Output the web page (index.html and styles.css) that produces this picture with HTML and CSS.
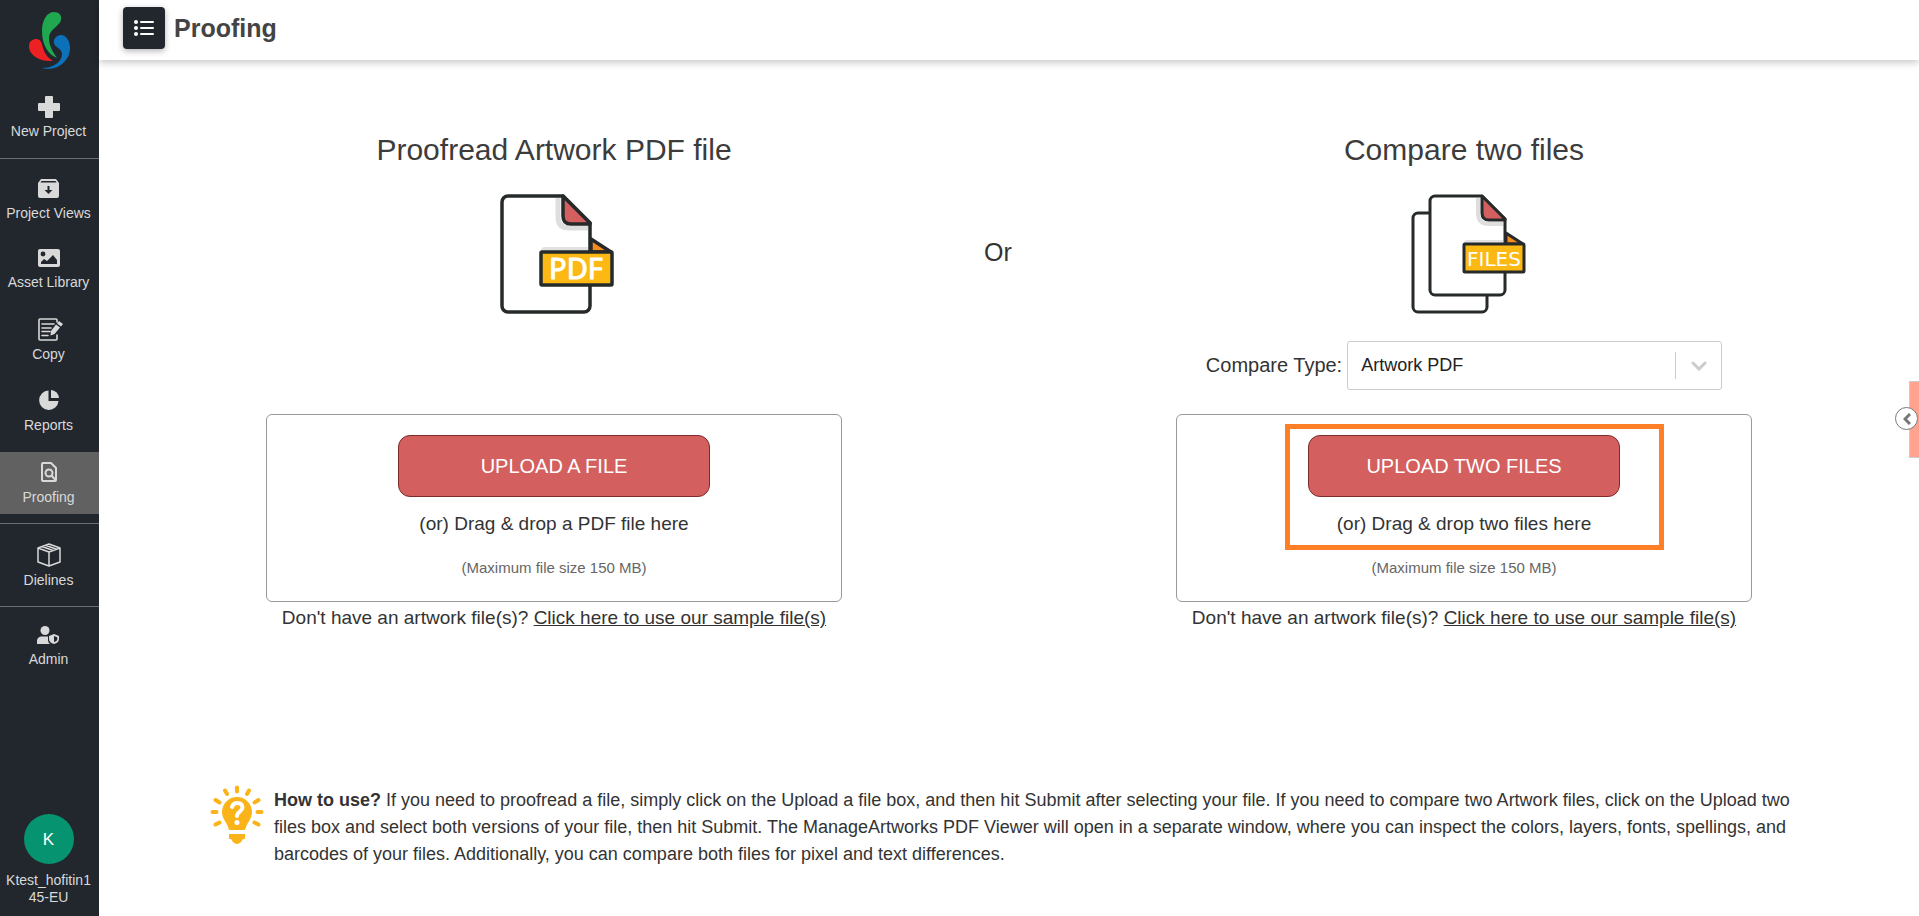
FILE: index.html
```html
<!DOCTYPE html>
<html lang="en">
<head>
  <meta charset="UTF-8">
  <meta name="viewport" content="width=device-width, initial-scale=1">
  <title>Proofing</title>
  <link rel="stylesheet" href="styles.css">
</head>
<body>

  <aside class="sidebar">
    <a href="#" class="logo" aria-label="Home">
      <svg width="42" height="58" viewBox="0 0 42 58">
        <path fill="#1fa84f" d="M28 46C20 43 13 34 13 19C13 8 18 0 25 0C30 0 33 3 32 8C31 14 20 17 20 26C20 34 24 40 28 46Z"/>
        <path fill="#ed2024" d="M24 49C12 50 0 44 0 34C0 29 4 27 7 27C12 27 13 31 14 36C16 42 19 46 24 49Z"/>
        <path fill="#0b72ba" d="M13 56C24 56 33 50 33 42C33 36 26 36 25 31C24 27 28 23 32 23C37 23 41 29 41 36C41 49 28 60 13 56Z"/>
      </svg>
    </a>

    <nav class="nav">
      <a href="#" class="nav-item">
        <svg class="nav-icon large" width="22" height="22" viewBox="0 0 22 22"><path fill="currentColor" d="M8 0h6a1 1 0 0 1 1 1v6h6a1 1 0 0 1 1 1v6a1 1 0 0 1-1 1h-6v6a1 1 0 0 1-1 1H8a1 1 0 0 1-1-1v-6H1a1 1 0 0 1-1-1V8a1 1 0 0 1 1-1h6V1a1 1 0 0 1 1-1z"/></svg>
        New Project
      </a>
      <hr class="divider wide">
      <a href="#" class="nav-item">
        <svg class="nav-icon" width="21" height="19" viewBox="0 0 21 19"><path fill="currentColor" fill-rule="evenodd" d="M3 0h15l3 4v13a2 2 0 0 1-2 2H2a2 2 0 0 1-2-2V4zM3.500 2L2.500 3.500h16L17.500 2zM9.500 7v4H6.500l4 4 4-4h-3V7z"/></svg>
        Project Views
      </a>
      <a href="#" class="nav-item">
        <svg class="nav-icon" width="22" height="18" viewBox="0 0 22 18"><path fill="currentColor" fill-rule="evenodd" d="M2 0h18a2 2 0 0 1 2 2v14a2 2 0 0 1-2 2H2a2 2 0 0 1-2-2V2a2 2 0 0 1 2-2zM5 2.600a2.400 2.400 0 1 0 0 4.800 2.400 2.400 0 0 0 0-4.800zM3 15h16v-4l-4-5-6 6-3-2-3 3z"/></svg>
        Asset Library
      </a>
      <a href="#" class="nav-item">
        <svg class="nav-icon large copy" width="26" height="23" viewBox="0 0 26 23" fill="none" stroke="currentColor" stroke-width="1.600" stroke-linecap="round">
          <path d="M19 4V2a1 1 0 0 0-1-1H2a1 1 0 0 0-1 1v19a1 1 0 0 0 1 1h16a1 1 0 0 0 1-1v-4M4 6h12M4 10h9M4 13.500h8M4 17.500h6"/>
          <path fill="currentColor" stroke="none" d="M21 3l4 3-2 2.500-4-3zM18 6.500l4 3-5.500 6.500-4 1.500.500-4.500z"/>
        </svg>
        Copy
      </a>
      <a href="#" class="nav-item">
        <svg class="nav-icon" width="20" height="20" viewBox="0 0 20 20" fill="currentColor"><path d="M9.500.500V11H19.500A9.700 9.700 0 1 1 9.500.500z"/><path d="M12 0a8.200 8.200 0 0 1 8 8h-8z"/></svg>
        Reports
      </a>
      <a href="#" class="nav-item active">
        <svg class="nav-icon" width="16" height="20" viewBox="0 0 16 20" fill="none" stroke="currentColor" stroke-width="2">
          <path d="M10 1H2a1 1 0 0 0-1 1v16a1 1 0 0 0 1 1h12a1 1 0 0 0 1-1V6z"/>
          <circle cx="8" cy="11" r="3.500"/><path d="M10.500 13.500L14.500 18"/>
        </svg>
        Proofing
      </a>
      <hr class="divider">
      <a href="#" class="nav-item">
        <svg class="nav-icon large" width="24" height="24" viewBox="0 0 24 24" fill="none" stroke="currentColor" stroke-width="1.500" stroke-linejoin="round">
          <path d="M12 1l11 4v14l-11 4-11-4V5zM1 5l11 4 11-4M12 9v14M5 3.500l11 4M8.500 2.300l11 4"/>
        </svg>
        Dielines
      </a>
      <hr class="divider">
      <a href="#" class="nav-item">
        <svg class="nav-icon admin" width="22" height="18" viewBox="0 0 22 18" fill="currentColor">
          <circle cx="8" cy="4.500" r="4.500"/>
          <path d="M0 18v-2.500C0 12 2 10.500 5 10.500h6v3.500c0 1.500.700 3 2 4z"/>
          <path fill-rule="evenodd" d="M17 8l5 2v3c0 2.500-2 4.500-5 5-3-.500-5-2.500-5-5v-3zM17 10v6c2-.500 3.300-1.500 3.300-3v-1.800z"/>
        </svg>
        Admin
      </a>
    </nav>

    <a href="#" class="user">
      <span class="avatar">K</span>
      <span class="user-name">Ktest_hofitin145-EU</span>
    </a>
  </aside>

  <div class="page">
    <header class="topbar">
      <button type="button" class="menu-btn" aria-label="Menu">
        <svg width="20" height="16" viewBox="0 0 20 16" stroke="#fff" stroke-width="2" stroke-linecap="round">
          <path d="M7 2h12M7 8h12M7 14h12"/>
          <g fill="#fff" stroke="none"><circle cx="2" cy="2" r="2"/><circle cx="2" cy="8" r="2"/><circle cx="2" cy="14" r="2"/></g>
        </svg>
      </button>
      <h1>Proofing</h1>
    </header>

    <main>
      <div class="panels">
        <section class="panel panel-left">
          <h2>Proofread Artwork PDF file</h2>
          <svg class="file-icon" width="120" height="121" viewBox="1 0 120 121" stroke="#262a2b" stroke-width="3.500" stroke-linejoin="round">
            <path fill="#fff" d="M15 3h55l27 27v83a6 6 0 0 1-6 6H15a6 6 0 0 1-6-6V9a6 6 0 0 1 6-6z"/>
            <path fill="none" stroke="#dedede" stroke-width="5" stroke-linejoin="miter" d="M65 5v19q0 11 11 11h19"/>
            <path fill="#e2e2e2" stroke="none" d="M48 58q0-4 4-4h43v4z"/>
            <path fill="#d45f5f" d="M70 3v20q0 8 8 8h19v-1z"/>
            <path fill="#f58c1e" d="M98 46v13h20z"/>
            <rect x="48" y="59" width="71" height="33" rx="1" fill="#fdb913"/>
            <text x="83" y="86" class="icon-text" font-size="29">PDF</text>
          </svg>
          <div class="drop-box">
            <button type="button" class="upload-btn">UPLOAD A FILE</button>
            <p class="drag-text">(or) Drag &amp; drop a PDF file here</p>
            <p class="size-text">(Maximum file size 150 MB)</p>
          </div>
          <p class="sample">Don't have an artwork file(s)? <a href="#">Click here to use our sample file(s)</a></p>
        </section>

        <div class="or">Or</div>

        <section class="panel panel-right">
          <h2>Compare two files</h2>
          <svg class="file-icon" width="122" height="121" viewBox="1 0 122 121" stroke="#262a2b" stroke-width="3" stroke-linejoin="round">
            <path fill="#fff" d="M16 20h64a5 5 0 0 1 5 5v89a5 5 0 0 1-5 5H16a5 5 0 0 1-5-5V25a5 5 0 0 1 5-5z"/>
            <path fill="#fff" d="M33 3h47l23 23v71a5 5 0 0 1-5 5H33a5 5 0 0 1-5-5V8a5 5 0 0 1 5-5z"/>
            <path fill="none" stroke="#dedede" stroke-width="4" stroke-linejoin="miter" d="M76 5v15q0 11 11 11h14"/>
            <path fill="#e2e2e2" stroke="none" d="M62 50q0-3 3-3h36v3z"/>
            <path fill="#d45f5f" d="M80 3v17q0 7 7 7h16v-1z"/>
            <path fill="#f58c1e" d="M104 40v11h17z"/>
            <rect x="62" y="51" width="60" height="28" rx="1" fill="#fdb913"/>
            <text x="92" y="73" class="icon-text thin" font-size="20">FILES</text>
          </svg>
          <div class="compare">
            <label for="compareType">Compare Type:</label>
            <div class="select-wrap">
              <select id="compareType">
                <option>Artwork PDF</option>
              </select>
              <span class="select-arrow">
                <svg width="16" height="10" viewBox="0 0 16 10" fill="none" stroke="#ccc" stroke-width="3" stroke-linecap="round"><path d="M2 2l6 6 6-6"/></svg>
              </span>
            </div>
          </div>
          <div class="drop-box">
            <button type="button" class="upload-btn">UPLOAD TWO FILES</button>
            <p class="drag-text">(or) Drag &amp; drop two files here</p>
            <p class="size-text">(Maximum file size 150 MB)</p>
            <div class="highlight"></div>
          </div>
          <p class="sample">Don't have an artwork file(s)? <a href="#">Click here to use our sample file(s)</a></p>
        </section>
      </div>

      <div class="how-to">
        <svg class="bulb" width="54" height="60" viewBox="0 0 54 60">
          <g stroke="#fbb31a" stroke-width="4" stroke-linecap="round">
            <path d="M27 2.500v4M15 5.500l2 3.500M39 5.500l-2 3.500M5.500 15l4 2.500M48.500 15l-4 2.500M2.500 27h4M51.500 27h-4M5.500 39.500l4-2M48.500 39.500l-4-2"/>
          </g>
          <path fill="#fbb31a" d="M27 12a15 15 0 0 1 15 15c0 7-5 10-7 18H19c-2-8-7-11-7-18a15 15 0 0 1 15-15zM19 49h16v5h-2l-2 3q-4 4-8 0l-2-3h-2z"/>
          <path fill="none" stroke="#fff" stroke-width="4" stroke-linecap="round" d="M22 22q1-4 5.500-4t5 4.500c0 4-5.500 4-5.500 8.500"/>
          <circle cx="27" cy="37.500" r="2.500" fill="#fff"/>
        </svg>
        <p><strong>How to use?</strong> If you need to proofread a file, simply click on the Upload a file box, and then hit Submit after selecting your file. If you need to compare two Artwork files, click on the Upload two files box and select both versions of your file, then hit Submit. The ManageArtworks PDF Viewer will open in a separate window, where you can inspect the colors, layers, fonts, spellings, and barcodes of your files. Additionally, you can compare both files for pixel and text differences.</p>
      </div>
    </main>
  </div>

  <div class="side-tab">
    <button type="button" class="side-tab-btn" aria-label="Open panel">
      <svg width="8" height="12" viewBox="0 0 8 12" fill="none" stroke="#777" stroke-width="3"><path d="M7 1L2 6l5 5"/></svg>
    </button>
  </div>

</body>
</html>
```

FILE: styles.css
```css
* {
  margin: 0;
  padding: 0;
  box-sizing: border-box;
}

body {
  display: flex;
  min-height: 100vh;
  font-family: Arial, "Liberation Sans", sans-serif;
  color: #333;
  background: #fff;
}

button, select {
  font-family: inherit;
  cursor: pointer;
}

/* Sidebar */
.sidebar {
  width: 99px;
  flex-shrink: 0;
  display: flex;
  flex-direction: column;
  background: #22272e;
  color: #d9d9d9;
  font-size: 14px;
  line-height: 16px;
}

.sidebar a {
  color: inherit;
  text-decoration: none;
}

.logo {
  display: flex;
  justify-content: center;
  padding: 12px 0 16px;
}

.nav {
  display: flex;
  flex-direction: column;
  gap: 9px;
}

.nav-item {
  display: flex;
  flex-direction: column;
  align-items: center;
  padding: 10px 2px 9px 0;
}

.nav-item.active {
  margin-top: 1px;
  background: #616161;
}

.nav-icon {
  margin-bottom: 7px;
}

.nav-icon.large {
  margin-bottom: 5px;
}

.nav-icon.copy {
  margin-left: 4px;
}

.nav-icon.admin {
  margin-right: 2px;
}

.divider {
  border: none;
  border-top: 1px solid #6b6f74;
}

.divider.wide {
  margin: 1px 0;
}

.user {
  display: flex;
  flex-direction: column;
  align-items: center;
  gap: 8px;
  margin-top: auto;
  padding: 0 7px 10px 5px;
  line-height: 17px;
}

.avatar {
  display: flex;
  align-items: center;
  justify-content: center;
  width: 50px;
  height: 50px;
  border-radius: 50%;
  background: #06936f;
  color: #fff;
  font-size: 17px;
}

.user-name {
  text-align: center;
  word-break: break-all;
}

/* Top bar */
.page {
  flex: 1;
  min-width: 0;
}

.topbar {
  display: flex;
  align-items: center;
  gap: 9px;
  padding: 7px 24px 11px;
  box-shadow: 0 2px 8px rgba(0, 0, 0, 0.25);
}

.menu-btn {
  display: flex;
  align-items: center;
  justify-content: center;
  width: 42px;
  height: 42px;
  border: none;
  border-radius: 4px;
  background: #22272e;
  box-shadow: 0 2px 6px rgba(0, 0, 0, 0.3);
}

h1 {
  font-size: 25px;
  line-height: 30px;
  color: #444;
}

/* Upload panels */
.panels {
  display: grid;
  grid-template-columns: 1fr minmax(0, 576px) 2fr minmax(0, 576px) 1fr;
  padding-top: 72px;
}

.panel {
  display: flex;
  flex-direction: column;
  align-items: center;
}

.panel-left {
  grid-column: 2;
}

.panel-right {
  grid-column: 4;
}

h2 {
  font-size: 30px;
  font-weight: normal;
  line-height: 36px;
  color: #3c3c3c;
}

.file-icon {
  margin-top: 25px;
  overflow: visible;
}

.icon-text {
  font-family: "Noto Sans", sans-serif;
  fill: #fff;
  stroke: #fff;
  stroke-width: 1;
  text-anchor: middle;
}

.icon-text.thin {
  font-family: "DejaVu Sans", sans-serif;
  stroke: none;
}

.or {
  grid-column: 3;
  padding: 105px 22px 0 0;
  font-size: 25px;
  line-height: 30px;
  text-align: center;
}

.compare {
  display: flex;
  align-items: center;
  gap: 5px;
  margin-top: 27px;
  font-size: 20px;
}

.select-wrap {
  position: relative;
}

.compare select {
  appearance: none;
  width: 375px;
  height: 49px;
  padding: 0 60px 2px 13px;
  border: 1px solid #ccc;
  border-radius: 3px;
  background: #fff;
  color: #222;
  font-size: 18px;
}

.select-arrow {
  position: absolute;
  top: 11px;
  right: 1px;
  width: 46px;
  height: 27px;
  display: flex;
  align-items: center;
  justify-content: center;
  border-left: 1px solid #ccc;
  pointer-events: none;
}

.drop-box {
  position: relative;
  display: flex;
  flex-direction: column;
  align-items: center;
  width: 100%;
  min-height: 188px;
  margin-top: auto;
  padding-top: 20px;
  border: 1px solid #999;
  border-radius: 6px;
}

.compare + .drop-box {
  margin-top: 24px;
}

.upload-btn {
  width: 312px;
  max-width: 100%;
  height: 62px;
  border: 1px solid #7d2c2c;
  border-radius: 12px;
  background: #d45f5f;
  color: #fff;
  font-size: 20px;
}

.drag-text {
  margin-top: 16px;
  font-size: 19px;
  line-height: 22px;
}

.size-text {
  margin-top: 24px;
  font-size: 15px;
  line-height: 18px;
  color: #666;
}

.highlight {
  position: absolute;
  top: 9px;
  left: 108px;
  width: 379px;
  height: 126px;
  border: 5px solid #ff7f27;
  pointer-events: none;
}

.sample {
  margin-top: 5px;
  font-size: 19px;
  line-height: 22px;
  white-space: nowrap;
}

.sample a {
  color: inherit;
}

/* Help text */
.how-to {
  display: flex;
  gap: 10px;
  margin-top: 156px;
  padding: 0 99px 30px 111px;
}

.how-to p {
  padding-top: 2px;
  font-size: 18px;
  line-height: 27px;
}

.bulb {
  flex-shrink: 0;
}

/* Collapsed panel at the right edge */
.side-tab {
  position: fixed;
  top: 381px;
  right: 0;
  width: 10px;
  height: 77px;
  border: 1px solid #ccc;
  border-right: none;
  background: #ffa28f;
}

.side-tab-btn {
  position: absolute;
  top: 25px;
  left: -15px;
  display: flex;
  align-items: center;
  justify-content: center;
  width: 23px;
  height: 23px;
  border: 1px solid #777;
  border-radius: 50%;
  background: #fff;
}
```
